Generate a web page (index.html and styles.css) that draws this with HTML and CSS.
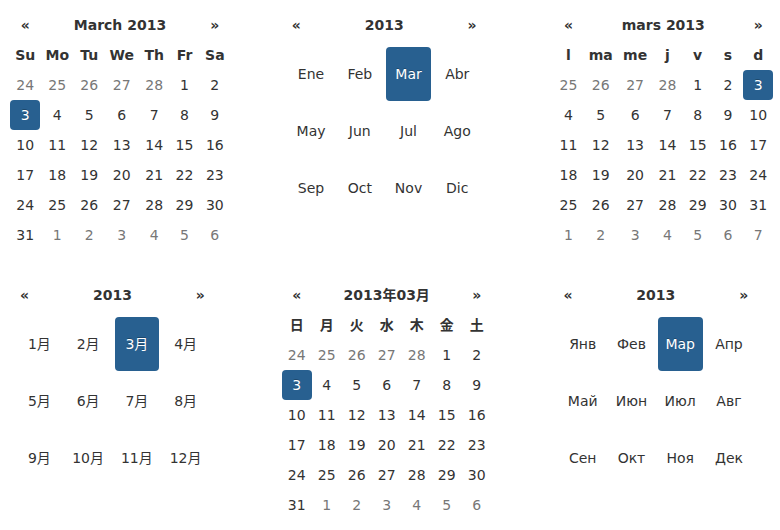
FILE: index.html
```html
<!DOCTYPE html>
<html lang="en">
<head>
<meta charset="utf-8">
<meta name="viewport" content="width=device-width, initial-scale=1">
<title>Date pickers</title>
<link rel="stylesheet" href="styles.css">
</head>
<body>
<main class="pickers">

<section class="picker" aria-label="March 2013">
<table class="days days-wide">
<thead>
<tr><th><button type="button" aria-label="Previous">«</button></th><th colspan="5"><button type="button">March 2013</button></th><th><button type="button" aria-label="Next">»</button></th></tr>
<tr><th scope="col">Su</th><th scope="col">Mo</th><th scope="col">Tu</th><th scope="col">We</th><th scope="col">Th</th><th scope="col">Fr</th><th scope="col">Sa</th></tr>
</thead>
<tbody>
<tr><td><button type="button" class="muted">24</button></td><td><button type="button" class="muted">25</button></td><td><button type="button" class="muted">26</button></td><td><button type="button" class="muted">27</button></td><td><button type="button" class="muted">28</button></td><td><button type="button">1</button></td><td><button type="button">2</button></td></tr>
<tr><td><button type="button" class="active">3</button></td><td><button type="button">4</button></td><td><button type="button">5</button></td><td><button type="button">6</button></td><td><button type="button">7</button></td><td><button type="button">8</button></td><td><button type="button">9</button></td></tr>
<tr><td><button type="button">10</button></td><td><button type="button">11</button></td><td><button type="button">12</button></td><td><button type="button">13</button></td><td><button type="button">14</button></td><td><button type="button">15</button></td><td><button type="button">16</button></td></tr>
<tr><td><button type="button">17</button></td><td><button type="button">18</button></td><td><button type="button">19</button></td><td><button type="button">20</button></td><td><button type="button">21</button></td><td><button type="button">22</button></td><td><button type="button">23</button></td></tr>
<tr><td><button type="button">24</button></td><td><button type="button">25</button></td><td><button type="button">26</button></td><td><button type="button">27</button></td><td><button type="button">28</button></td><td><button type="button">29</button></td><td><button type="button">30</button></td></tr>
<tr><td><button type="button">31</button></td><td><button type="button" class="muted">1</button></td><td><button type="button" class="muted">2</button></td><td><button type="button" class="muted">3</button></td><td><button type="button" class="muted">4</button></td><td><button type="button" class="muted">5</button></td><td><button type="button" class="muted">6</button></td></tr>
</tbody>
</table>
</section>

<section class="picker" lang="es" aria-label="2013">
<table class="months">
<thead>
<tr><th><button type="button" aria-label="Anterior">«</button></th><th colspan="5"><button type="button">2013</button></th><th><button type="button" aria-label="Siguiente">»</button></th></tr>
</thead>
<tbody>
<tr><td colspan="7"><div class="month-grid">
<button type="button">Ene</button><button type="button">Feb</button><button type="button" class="active">Mar</button><button type="button">Abr</button>
<button type="button">May</button><button type="button">Jun</button><button type="button">Jul</button><button type="button">Ago</button>
<button type="button">Sep</button><button type="button">Oct</button><button type="button">Nov</button><button type="button">Dic</button>
</div></td></tr>
</tbody>
</table>
</section>

<section class="picker" lang="fr" aria-label="mars 2013">
<table class="days days-wide">
<thead>
<tr><th><button type="button" aria-label="Précédent">«</button></th><th colspan="5"><button type="button">mars 2013</button></th><th><button type="button" aria-label="Suivant">»</button></th></tr>
<tr><th scope="col">l</th><th scope="col">ma</th><th scope="col">me</th><th scope="col">j</th><th scope="col">v</th><th scope="col">s</th><th scope="col">d</th></tr>
</thead>
<tbody>
<tr><td><button type="button" class="muted">25</button></td><td><button type="button" class="muted">26</button></td><td><button type="button" class="muted">27</button></td><td><button type="button" class="muted">28</button></td><td><button type="button">1</button></td><td><button type="button">2</button></td><td><button type="button" class="active">3</button></td></tr>
<tr><td><button type="button">4</button></td><td><button type="button">5</button></td><td><button type="button">6</button></td><td><button type="button">7</button></td><td><button type="button">8</button></td><td><button type="button">9</button></td><td><button type="button">10</button></td></tr>
<tr><td><button type="button">11</button></td><td><button type="button">12</button></td><td><button type="button">13</button></td><td><button type="button">14</button></td><td><button type="button">15</button></td><td><button type="button">16</button></td><td><button type="button">17</button></td></tr>
<tr><td><button type="button">18</button></td><td><button type="button">19</button></td><td><button type="button">20</button></td><td><button type="button">21</button></td><td><button type="button">22</button></td><td><button type="button">23</button></td><td><button type="button">24</button></td></tr>
<tr><td><button type="button">25</button></td><td><button type="button">26</button></td><td><button type="button">27</button></td><td><button type="button">28</button></td><td><button type="button">29</button></td><td><button type="button">30</button></td><td><button type="button">31</button></td></tr>
<tr><td><button type="button" class="muted">1</button></td><td><button type="button" class="muted">2</button></td><td><button type="button" class="muted">3</button></td><td><button type="button" class="muted">4</button></td><td><button type="button" class="muted">5</button></td><td><button type="button" class="muted">6</button></td><td><button type="button" class="muted">7</button></td></tr>
</tbody>
</table>
</section>

<section class="picker" lang="ja" aria-label="2013">
<table class="months">
<thead>
<tr><th><button type="button" aria-label="前">«</button></th><th colspan="5"><button type="button">2013</button></th><th><button type="button" aria-label="次">»</button></th></tr>
</thead>
<tbody>
<tr><td colspan="7"><div class="month-grid">
<button type="button">1月</button><button type="button">2月</button><button type="button" class="active">3月</button><button type="button">4月</button>
<button type="button">5月</button><button type="button">6月</button><button type="button">7月</button><button type="button">8月</button>
<button type="button">9月</button><button type="button">10月</button><button type="button">11月</button><button type="button">12月</button>
</div></td></tr>
</tbody>
</table>
</section>

<section class="picker" lang="ja" aria-label="2013年03月">
<table class="days">
<thead>
<tr><th><button type="button" aria-label="前">«</button></th><th colspan="5"><button type="button">2013年03月</button></th><th><button type="button" aria-label="次">»</button></th></tr>
<tr><th scope="col">日</th><th scope="col">月</th><th scope="col">火</th><th scope="col">水</th><th scope="col">木</th><th scope="col">金</th><th scope="col">土</th></tr>
</thead>
<tbody>
<tr><td><button type="button" class="muted">24</button></td><td><button type="button" class="muted">25</button></td><td><button type="button" class="muted">26</button></td><td><button type="button" class="muted">27</button></td><td><button type="button" class="muted">28</button></td><td><button type="button">1</button></td><td><button type="button">2</button></td></tr>
<tr><td><button type="button" class="active">3</button></td><td><button type="button">4</button></td><td><button type="button">5</button></td><td><button type="button">6</button></td><td><button type="button">7</button></td><td><button type="button">8</button></td><td><button type="button">9</button></td></tr>
<tr><td><button type="button">10</button></td><td><button type="button">11</button></td><td><button type="button">12</button></td><td><button type="button">13</button></td><td><button type="button">14</button></td><td><button type="button">15</button></td><td><button type="button">16</button></td></tr>
<tr><td><button type="button">17</button></td><td><button type="button">18</button></td><td><button type="button">19</button></td><td><button type="button">20</button></td><td><button type="button">21</button></td><td><button type="button">22</button></td><td><button type="button">23</button></td></tr>
<tr><td><button type="button">24</button></td><td><button type="button">25</button></td><td><button type="button">26</button></td><td><button type="button">27</button></td><td><button type="button">28</button></td><td><button type="button">29</button></td><td><button type="button">30</button></td></tr>
<tr><td><button type="button">31</button></td><td><button type="button" class="muted">1</button></td><td><button type="button" class="muted">2</button></td><td><button type="button" class="muted">3</button></td><td><button type="button" class="muted">4</button></td><td><button type="button" class="muted">5</button></td><td><button type="button" class="muted">6</button></td></tr>
</tbody>
</table>
</section>

<section class="picker" lang="ru" aria-label="2013">
<table class="months">
<thead>
<tr><th><button type="button" aria-label="Назад">«</button></th><th colspan="5"><button type="button">2013</button></th><th><button type="button" aria-label="Вперёд">»</button></th></tr>
</thead>
<tbody>
<tr><td colspan="7"><div class="month-grid">
<button type="button">Янв</button><button type="button">Фев</button><button type="button" class="active">Мар</button><button type="button">Апр</button>
<button type="button">Май</button><button type="button">Июн</button><button type="button">Июл</button><button type="button">Авг</button>
<button type="button">Сен</button><button type="button">Окт</button><button type="button">Ноя</button><button type="button">Дек</button>
</div></td></tr>
</tbody>
</table>
</section>

</main>
</body>
</html>
```
FILE: styles.css
```css
* {
  box-sizing: border-box;
}

body {
  margin: 0;
  background: #fff;
  color: #333;
  font-family: "DejaVu Sans", "Noto Sans CJK JP", sans-serif;
  font-size: 14px;
  line-height: 20px;
}

.pickers {
  display: grid;
  grid-template-columns: repeat(3, minmax(0, 1fr));
  gap: 30px 52px;
  padding: 10px 7px 10px 10px;
}

table {
  border-collapse: separate;
  border-spacing: 0;
}

th,
td {
  min-width: 30px;
  height: 30px;
  padding: 0;
  text-align: center;
}

th[scope="col"] {
  padding: 0 5px;
}

.days-wide {
  width: 220px;
}

.months {
  width: 205px;
  table-layout: fixed;
}

.months th {
  min-width: 0;
}

button {
  display: block;
  width: 100%;
  min-height: 30px;
  padding: 5px;
  border: 0;
  border-radius: 4px;
  background: none;
  color: inherit;
  font: inherit;
  text-align: center;
  cursor: pointer;
}

.month-grid {
  display: grid;
  grid-template-columns: repeat(4, minmax(0, 1fr));
  gap: 3px 4px;
  padding: 7px;
}

.month-grid button {
  height: 54px;
  padding: 0;
  white-space: nowrap;
}

.muted {
  color: #777;
}

.active {
  background: #286090;
  color: #fff;
  text-shadow: 0 -1px 0 rgba(0, 0, 0, 0.25);
}
```
